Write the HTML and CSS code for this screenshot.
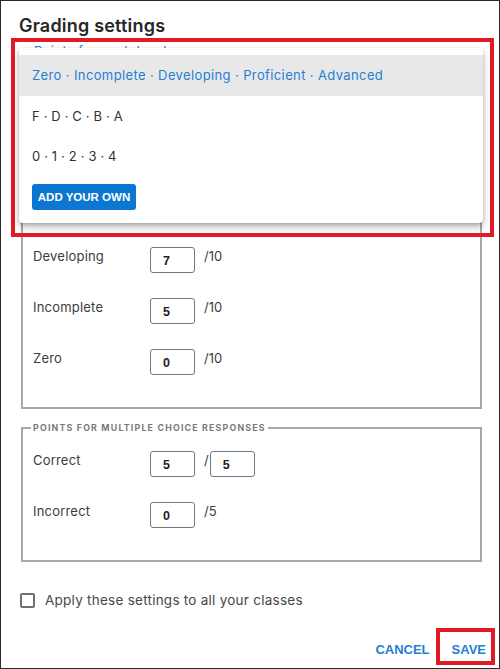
FILE: index.html
```html
<!DOCTYPE html>
<html lang="en">
<head>
<meta charset="utf-8">
<title>Grading settings</title>
<link rel="stylesheet" href="styles.css">
</head>
<body>
<div class="dialog">
  <h1 class="title">Grading settings</h1>

  <div class="scale">
    <div class="scale-label">Points for each level</div>
    <div class="scale-box"></div>
  </div>

  <fieldset class="group">
    <legend class="legend covered">Points for each level</legend>
    <div class="row covered"><span class="label">Advanced</span><input class="box" type="text" value="10"><span class="out">/10</span></div>
    <div class="row covered"><span class="label">Proficient</span><input class="box" type="text" value="8"><span class="out">/10</span></div>
    <div class="row"><span class="label">Developing</span><input class="box" type="text" value="7"><span class="out">/10</span></div>
    <div class="row"><span class="label">Incomplete</span><input class="box" type="text" value="5"><span class="out">/10</span></div>
    <div class="row"><span class="label">Zero</span><input class="box" type="text" value="0"><span class="out">/10</span></div>
  </fieldset>

  <fieldset class="group group-mc">
    <legend class="legend">Points for multiple choice responses</legend>
    <div class="row"><span class="label">Correct</span><input class="box" type="text" value="5"><span class="slash">/</span><input class="box" type="text" value="5"></div>
    <div class="row"><span class="label">Incorrect</span><input class="box" type="text" value="0"><span class="out">/5</span></div>
  </fieldset>

  <label class="apply"><span class="check"></span><span class="apply-text">Apply these settings to all your classes</span></label>

  <div class="footer">
    <button class="action" type="button">Cancel</button>
    <button class="action action-save" type="button">Save</button>
  </div>

  <div class="highlight"></div>
  <div class="menu">
    <div class="item item-active">Zero · Incomplete · Developing · Proficient · Advanced</div>
    <div class="item">F · D · C · B · A</div>
    <div class="item">0 · 1 · 2 · 3 · 4</div>
    <button class="add" type="button">Add your own</button>
  </div>
</div>
</body>
</html>
```
FILE: styles.css
```css
* { box-sizing: border-box; }
html, body { margin: 0; padding: 0; background: #fff; }
body { font-family: Inter, "Noto Sans", sans-serif; color: #3c3c3c; }

.dialog {
  position: relative;
  width: 500px;
  height: 669px;
  border: 1px solid #2a2a2a;
  padding: 13px 17px 0 20px;
  overflow: hidden;
}

.title {
  margin: 0 0 0 -2px;
  font-size: 18px;
  line-height: 24px;
  font-weight: 600;
  letter-spacing: 0.2px;
  color: #262626;
}

.scale { height: 78px; padding-top: 4px; }
.scale-label { font-size: 13px; line-height: 18px; color: #1f7fd4; padding-left: 13px; letter-spacing: 0.4px; }
.scale-box { height: 36px; }

.covered { visibility: hidden; }

.group {
  margin: 0;
  border: 2px solid #a8a8a8;
  border-radius: 0;
  padding: 17px 12px 32px 9px;
}
.group-mc { margin-top: 13px; }

.legend {
  margin-left: -1px;
  padding: 0 2px;
  font-size: 8.8px;
  line-height: 12px;
  font-weight: 700;
  letter-spacing: 1.2px;
  text-transform: uppercase;
  color: #7a7a7a;
}

.row {
  display: flex;
  align-items: flex-start;
  height: 26px;
  margin-bottom: 25px;
}
.row:last-child { margin-bottom: 0; }

.label {
  width: 118px;
  padding-left: 1px;
  font-size: 13px;
  line-height: 18px;
  letter-spacing: 0.2px;
  color: #3c3c3c;
}

.box {
  width: 45px;
  height: 26px;
  margin: 0;
  border: 1px solid #697a86;
  border-radius: 3px;
  padding: 2px 0 0 12px;
  font-family: "Liberation Sans", Arial, sans-serif;
  font-weight: 700;
  font-size: 12.5px;
  color: #222;
  background: #fff;
}

.out {
  margin-left: 9px;
  font-size: 13px;
  line-height: 18px;
  color: #3c3c3c;
}
.slash {
  margin-left: 9px;
  margin-right: 1px;
  font-size: 13px;
  line-height: 18px;
  color: #3c3c3c;
}

.apply {
  display: flex;
  align-items: center;
  height: 20px;
  margin-top: 28px;
  margin-left: -1px;
}
.check {
  width: 15px;
  height: 15px;
  border: 2px solid #707070;
  border-radius: 2px;
  margin-right: 10px;
}
.apply-text {
  font-size: 13.5px;
  color: #474747;
  letter-spacing: 0.25px;
}

.footer {
  display: flex;
  justify-content: flex-end;
  align-items: flex-start;
  margin-top: 18px;
  margin-right: -13px;
}
.action {
  border: 4px solid transparent;
  background: transparent;
  margin: 0;
  padding: 9px 0 2px;
  font-family: "Liberation Sans", Arial, sans-serif;
  font-weight: 700;
  font-size: 13px;
  line-height: 18px;
  text-transform: uppercase;
  color: #1f7fd4;
  cursor: pointer;
}
.action-save {
  margin-left: 2px;
  border-color: #e11b25;
  padding: 9px 5px 2px 12px;
}

.highlight {
  position: absolute;
  left: 10px;
  top: 37px;
  width: 483px;
  height: 199px;
  border: 4px solid #e11b25;
}

.menu {
  position: absolute;
  left: 18px;
  top: 47px;
  width: 464px;
  height: 175px;
  background: #fff;
  border-radius: 4px;
  padding-top: 7px;
  box-shadow: 0 4px 7px rgba(0, 0, 0, 0.28), 0 1px 3px rgba(0, 0, 0, 0.15);
}
.item {
  height: 40px;
  line-height: 40px;
  padding-left: 13px;
  font-size: 13px;
  color: #333;
  letter-spacing: 0.15px;
}
.item-active {
  height: 41px;
  line-height: 41px;
  background: #e8e8e8;
  color: #1f7fd4;
  letter-spacing: 0.38px;
}
.add {
  display: block;
  margin: 8px 0 0 13px;
  height: 26px;
  width: 104px;
  padding: 0;
  border: none;
  border-radius: 3px;
  background: #0b77d2;
  color: #fff;
  font-family: "Liberation Sans", Arial, sans-serif;
  font-weight: 700;
  font-size: 11.5px;
  text-transform: uppercase;
}
```
